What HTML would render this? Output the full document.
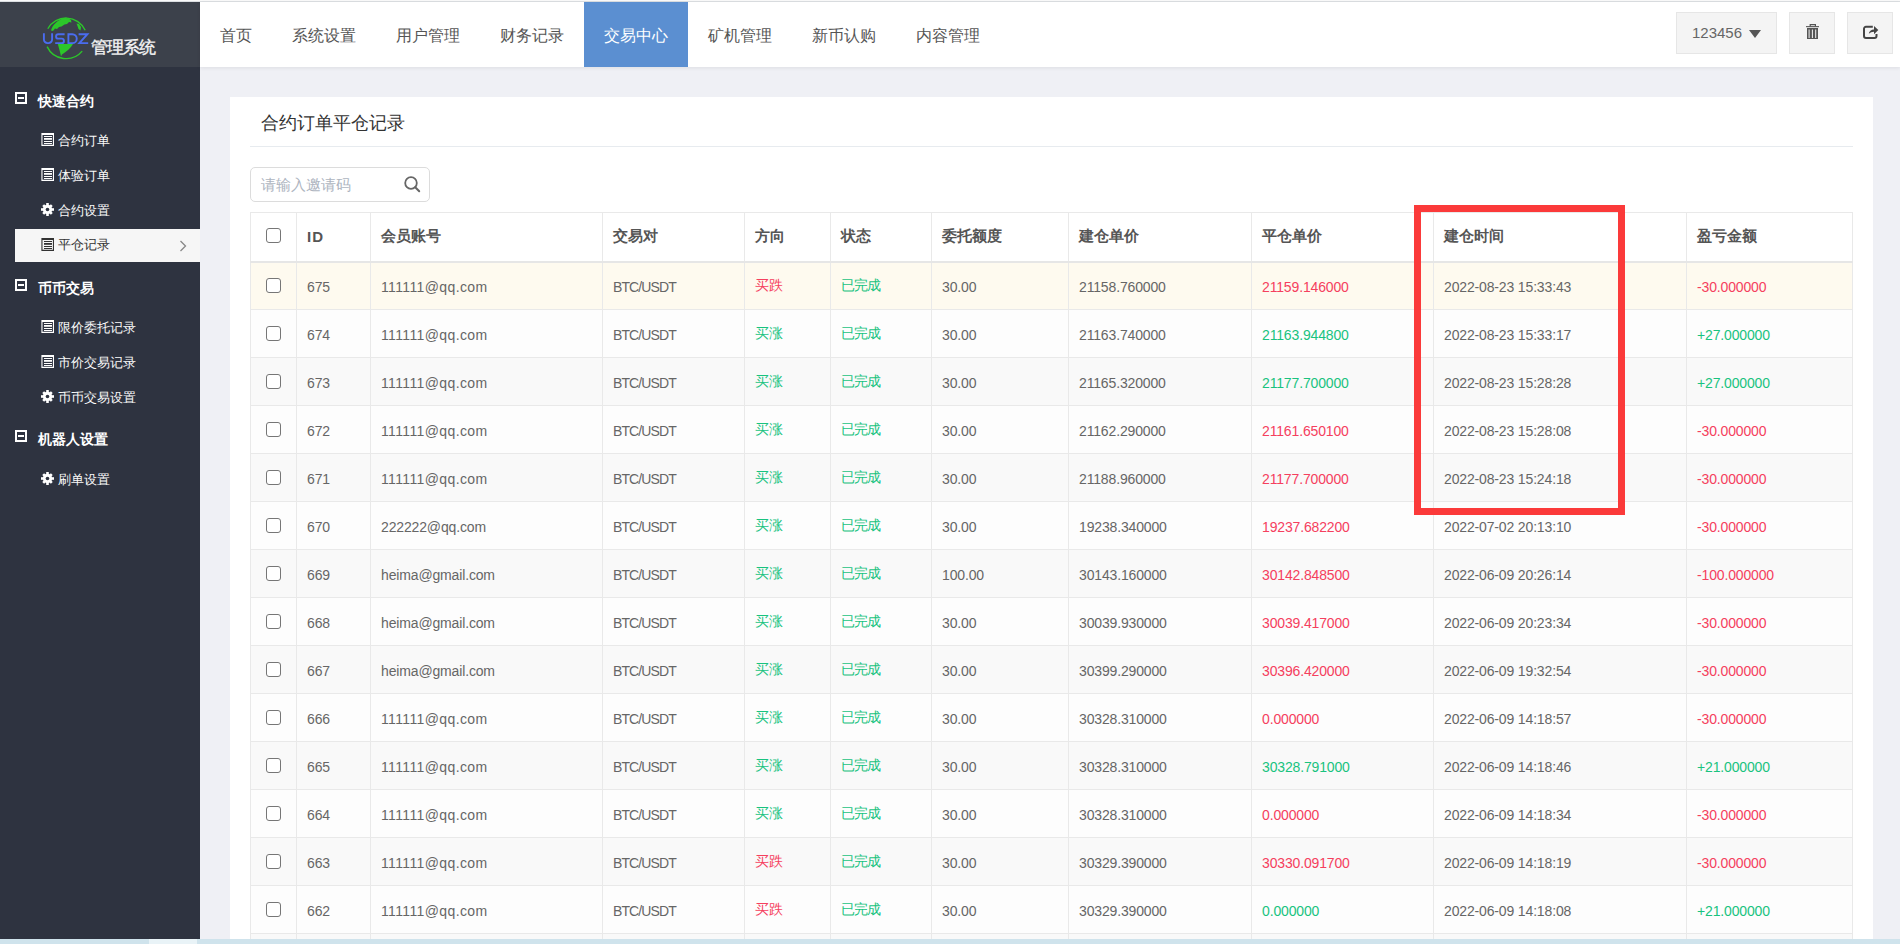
<!DOCTYPE html>
<html><head><meta charset="utf-8"><title>管理系统</title>
<style>
*{box-sizing:border-box;margin:0;padding:0}
html,body{width:1900px;height:944px;overflow:hidden;background:#eff0f5;font-family:"Liberation Sans",sans-serif;color:#666}
.topline{position:absolute;left:0;top:0;width:1900px;height:2px;background:#fafafa;border-bottom:1px solid #dcdfe2}
.side{position:absolute;left:0;top:2px;width:200px;height:937px;background:#2e3340}
.logo{position:absolute;left:0;top:0;width:200px;height:65px;background:#3c414b}
.logo svg{position:absolute;left:40px;top:12px}
.logo .lt{position:absolute;left:91px;top:35px;font-size:17px;line-height:22px;color:#f4f4f4;font-weight:500;letter-spacing:-1.1px;-webkit-text-stroke:.35px #f4f4f4}
.grp{position:absolute;left:0;width:200px;height:24px;color:#fff;font-weight:bold;font-size:14px;line-height:24px}
.grp .mi{position:absolute;left:15px;top:3px;width:12px;height:12px;border:2px solid #fff;}
.grp .mi:after{content:"";position:absolute;left:1px;top:3px;width:6px;height:2px;background:#fff}
.grp span{position:absolute;left:38px;top:0}
.it{position:absolute;left:15px;width:185px;height:35px;color:#fafafa;font-size:13px;line-height:35px;font-weight:500}
.it svg{position:absolute;left:26px;top:11px}
.it span{position:absolute;left:43px;top:1px}
.it.act{background:#f6f6f6;color:#333;height:33px;line-height:33px;font-weight:normal}
.it.act svg{top:9px}
.it.act span{top:-1px}
.it.act .chev{position:absolute;left:164px;top:11px}
.hdr{position:absolute;left:200px;top:2px;width:1700px;height:65px;background:#fff;box-shadow:0 1px 4px rgba(0,0,0,.08)}
.nav{position:absolute;top:0;height:65px;line-height:67px;font-size:16px;color:#555;text-align:center}
.nav.act{background:#5b8fd1;color:#fff}
.btn{position:absolute;top:10px;height:42px;background:#f4f4f4;border:1px solid #e6e6e6}
.panel{position:absolute;left:230px;top:97px;width:1643px;height:850px;background:#fff}
.title{position:absolute;left:31px;top:13px;font-size:18px;line-height:26px;color:#333}
.hr{position:absolute;left:20px;top:49px;width:1603px;height:1px;background:#e7ebef}
.search{position:absolute;left:20px;top:70px;width:180px;height:35px;border:1px solid #dcdcdc;border-radius:5px}
.search .ph{position:absolute;left:10px;top:7px;font-size:15px;line-height:20px;color:#aeb5bf}
.search svg{position:absolute;left:153px;top:8px}
table{position:absolute;left:20px;top:115px;border-collapse:collapse;table-layout:fixed;width:1602px}
td,th{border:1px solid #e9e9e9;padding:0 0 0 10px;font-size:14px;text-align:left;white-space:nowrap;overflow:hidden}
th{height:49px;font-size:15px;font-weight:bold;color:#555;border-bottom:2px solid #e6e6e6;background:#fff}
td{height:48px;color:#666;padding-top:2px;letter-spacing:-.15px}
tr.odd td{background:#f9f9f9}
tr.even td{background:#fdfdfd}
tr.hov td{background:#fefaef}
td.r{color:#f5405e}
td.g{color:#19c37f}
td.cj{padding-top:0}
.la{letter-spacing:.37px}.lb{letter-spacing:-.9px}.lw{letter-spacing:-.9px}
td.cb,th.cb{padding:0;position:relative}
.chk{position:absolute;left:15px;top:16px;width:15px;height:15px;border:1px solid #767676;border-radius:3px;background:#fff}
th .chk{top:15px}
tr.hov .chk{top:15px}
.redbox{position:absolute;left:1414px;top:205px;width:211px;height:310px;border:7px solid #fb3a3a}
.bbar{position:absolute;left:0;top:939px;width:1900px;height:5px;background:#cfe3ec}
.bbar i{position:absolute;left:149px;top:0;width:48px;height:5px;background:#e9f3f7}
</style></head><body>
<div class="topline"></div>
<div class="side">
 <div class="logo">
  <svg width="52" height="48" viewBox="0 0 52 48">
   <path d="M7.8 14.7 A21 21 0 0 1 45.2 16.3" fill="none" stroke="#2cc72a" stroke-width="1.3"/>
   <path d="M7.1 32.6 A21 21 0 0 0 42.2 37.1" fill="none" stroke="#2cc72a" stroke-width="1.4"/>
   <path d="M11 16.5 C12.5 11 17 6.5 24 4 L28 4.2 L31 6 L31.5 8.5 L29 8 L27 10 L24.5 10.5 L21.5 12.5 L19 13 L17 15 L15 14.5 L13 17 Z" fill="#2cc72a"/>
   <path d="M36.5 9.5 L39 10 L41 13 L40.5 16.5 L38.5 15 L37.5 12 Z" fill="#2cc72a"/>
   <path d="M17.8 30 L33 30 C31 34 27 37 22 40.5 L21 42.5 L20 38 Z" fill="#2cc72a"/>
   <g fill="none" stroke="#4a6cf0" stroke-width="1.9"><path d="M3.9 19.3V25.5A3.6 3.6 0 0 0 7.5 29.1H8.5A3.6 3.6 0 0 0 12.1 25.5V19.3"/><path d="M24.6 20.2H18.3A2.225 2.225 0 0 0 18.3 24.65H21.7A2.225 2.225 0 0 1 21.7 29.1H15.2"/><path d="M28.4 20.2V29.1H32.3A4.45 4.45 0 0 0 32.3 20.2Z"/><path d="M38.6 20.2H47.4L39.4 29.1H48.2"/></g>
  </svg>
  <div class="lt">管理系统</div>
 </div>
 <div class="grp" style="top:87px"><i class="mi"></i><span>快速合约</span></div>
 <div class="it" style="top:120px"><svg width="13" height="13" viewBox="0 0 13 13"><g fill="#fff"><path d="M0.4 0H13V13H0.4Z M1.5 2H11.9V11.8H1.5Z" fill-rule="evenodd"/><rect x="3" y="3" width="8" height="1"/><rect x="3" y="5" width="8" height="1.8"/><rect x="3" y="8" width="8" height="1"/><rect x="3" y="10" width="8" height="1"/></g></svg><span>合约订单</span></div>
 <div class="it" style="top:155px"><svg width="13" height="13" viewBox="0 0 13 13"><g fill="#fff"><path d="M0.4 0H13V13H0.4Z M1.5 2H11.9V11.8H1.5Z" fill-rule="evenodd"/><rect x="3" y="3" width="8" height="1"/><rect x="3" y="5" width="8" height="1.8"/><rect x="3" y="8" width="8" height="1"/><rect x="3" y="10" width="8" height="1"/></g></svg><span>体验订单</span></div>
 <div class="it" style="top:190px"><svg width="13" height="13" viewBox="0 0 13 13"><g fill="#fff"><circle cx="6.5" cy="6.5" r="4.7"/><rect x="5.2" y="0" width="2.6" height="13"/><rect x="0" y="5.2" width="13" height="2.6"/><rect x="5.2" y="0.4" width="2.6" height="12.2" transform="rotate(45 6.5 6.5)"/><rect x="5.2" y="0.4" width="2.6" height="12.2" transform="rotate(-45 6.5 6.5)"/></g><circle cx="6.5" cy="6.5" r="1.8" fill="#2e3340"/></svg><span>合约设置</span></div>
 <div class="it act" style="top:227px"><svg width="13" height="13" viewBox="0 0 13 13"><g fill="#333"><path d="M0.4 0H13V13H0.4Z M1.5 2H11.9V11.8H1.5Z" fill-rule="evenodd"/><rect x="3" y="3" width="8" height="1"/><rect x="3" y="5" width="8" height="1.8"/><rect x="3" y="8" width="8" height="1"/><rect x="3" y="10" width="8" height="1"/></g></svg><span>平仓记录</span><svg class="chev" width="8" height="12" viewBox="0 0 8 12"><path d="M1.5 1 L6.5 6 L1.5 11" fill="none" stroke="#888" stroke-width="1.3"/></svg></div>
 <div class="grp" style="top:274px"><i class="mi"></i><span>币币交易</span></div>
 <div class="it" style="top:307px"><svg width="13" height="13" viewBox="0 0 13 13"><g fill="#fff"><path d="M0.4 0H13V13H0.4Z M1.5 2H11.9V11.8H1.5Z" fill-rule="evenodd"/><rect x="3" y="3" width="8" height="1"/><rect x="3" y="5" width="8" height="1.8"/><rect x="3" y="8" width="8" height="1"/><rect x="3" y="10" width="8" height="1"/></g></svg><span>限价委托记录</span></div>
 <div class="it" style="top:342px"><svg width="13" height="13" viewBox="0 0 13 13"><g fill="#fff"><path d="M0.4 0H13V13H0.4Z M1.5 2H11.9V11.8H1.5Z" fill-rule="evenodd"/><rect x="3" y="3" width="8" height="1"/><rect x="3" y="5" width="8" height="1.8"/><rect x="3" y="8" width="8" height="1"/><rect x="3" y="10" width="8" height="1"/></g></svg><span>市价交易记录</span></div>
 <div class="it" style="top:377px"><svg width="13" height="13" viewBox="0 0 13 13"><g fill="#fff"><circle cx="6.5" cy="6.5" r="4.7"/><rect x="5.2" y="0" width="2.6" height="13"/><rect x="0" y="5.2" width="13" height="2.6"/><rect x="5.2" y="0.4" width="2.6" height="12.2" transform="rotate(45 6.5 6.5)"/><rect x="5.2" y="0.4" width="2.6" height="12.2" transform="rotate(-45 6.5 6.5)"/></g><circle cx="6.5" cy="6.5" r="1.8" fill="#2e3340"/></svg><span>币币交易设置</span></div>
 <div class="grp" style="top:425px"><i class="mi"></i><span>机器人设置</span></div>
 <div class="it" style="top:459px"><svg width="13" height="13" viewBox="0 0 13 13"><g fill="#fff"><circle cx="6.5" cy="6.5" r="4.7"/><rect x="5.2" y="0" width="2.6" height="13"/><rect x="0" y="5.2" width="13" height="2.6"/><rect x="5.2" y="0.4" width="2.6" height="12.2" transform="rotate(45 6.5 6.5)"/><rect x="5.2" y="0.4" width="2.6" height="12.2" transform="rotate(-45 6.5 6.5)"/></g><circle cx="6.5" cy="6.5" r="1.8" fill="#2e3340"/></svg><span>刷单设置</span></div>
</div>
<div class="hdr">
 <div class="nav" style="left:0;width:72px">首页</div>
 <div class="nav" style="left:72px;width:104px">系统设置</div>
 <div class="nav" style="left:176px;width:104px">用户管理</div>
 <div class="nav" style="left:280px;width:104px">财务记录</div>
 <div class="nav act" style="left:384px;width:104px">交易中心</div>
 <div class="nav" style="left:488px;width:104px">矿机管理</div>
 <div class="nav" style="left:592px;width:104px">新币认购</div>
 <div class="nav" style="left:696px;width:104px">内容管理</div>
 <div class="btn" style="left:1476px;width:101px"><span style="position:absolute;left:15px;top:10px;font-size:15px;line-height:20px;color:#666">123456</span><svg style="position:absolute;left:72px;top:17px" width="12" height="8" viewBox="0 0 12 8"><path d="M0 0H12L6 8Z" fill="#555"/></svg></div>
 <div class="btn" style="left:1589px;width:46px"><svg style="position:absolute;left:16px;top:11px" width="14" height="16" viewBox="0 0 14 16"><g fill="#555"><path d="M4.2 2.4V0.7H9.4V2.4" fill="none" stroke="#555" stroke-width="1.2"/><rect x="0" y="2.1" width="13" height="1.1"/><path d="M1 4H12V15H1Z M2.6 5.6V14H3.6V5.6Z M5.9 5.6V14H6.9V5.6Z M9.2 5.6V14H10.2V5.6Z" fill-rule="evenodd"/></g></svg></div>
 <div class="btn" style="left:1647px;width:46px"><svg style="position:absolute;left:15px;top:12px" width="16" height="15" viewBox="0 0 16 15"><path d="M9.8 1.8H3A2 2 0 0 0 1 3.8V11A2 2 0 0 0 3 13H11.5A2 2 0 0 0 13.5 11V9" fill="none" stroke="#444" stroke-width="2"/><path d="M5.8 8.8C6.2 6.2 8.2 4.6 11 4.6V1L15.3 5.1L11 9.2V6.8C8.8 6.8 7.2 7.5 5.8 8.8Z" fill="#444"/></svg></div>
</div>
<div class="panel">
 <div class="title">合约订单平仓记录</div>
 <div class="hr"></div>
 <div class="search"><span class="ph">请输入邀请码</span><svg width="17" height="17" viewBox="0 0 17 17"><circle cx="7" cy="7" r="5.8" fill="none" stroke="#666" stroke-width="1.8"/><path d="M11.2 11.2L15.2 15.2" stroke="#666" stroke-width="2" stroke-linecap="round"/></svg></div>
 <table>
  <colgroup><col style="width:46px"><col style="width:74px"><col style="width:232px"><col style="width:142px"><col style="width:86px"><col style="width:101px"><col style="width:137px"><col style="width:183px"><col style="width:182px"><col style="width:253px"><col style="width:166px"></colgroup>
  <tr><th class="cb"><i class="chk"></i></th><th style="letter-spacing:1px">ID</th><th>会员账号</th><th>交易对</th><th>方向</th><th>状态</th><th>委托额度</th><th>建仓单价</th><th>平仓单价</th><th>建仓时间</th><th>盈亏金额</th></tr>
<tr class="hov"><td class="cb"><i class="chk"></i></td><td>675</td><td class="la">111111@qq.com</td><td class="lb">BTC/USDT</td><td class="r cj">买跌</td><td class="g lw cj">已完成</td><td>30.00</td><td>21158.760000</td><td class="r">21159.146000</td><td>2022-08-23 15:33:43</td><td class="r">-30.000000</td></tr>
<tr class="even"><td class="cb"><i class="chk"></i></td><td>674</td><td class="la">111111@qq.com</td><td class="lb">BTC/USDT</td><td class="g cj">买涨</td><td class="g lw cj">已完成</td><td>30.00</td><td>21163.740000</td><td class="g">21163.944800</td><td>2022-08-23 15:33:17</td><td class="g">+27.000000</td></tr>
<tr class="odd"><td class="cb"><i class="chk"></i></td><td>673</td><td class="la">111111@qq.com</td><td class="lb">BTC/USDT</td><td class="g cj">买涨</td><td class="g lw cj">已完成</td><td>30.00</td><td>21165.320000</td><td class="g">21177.700000</td><td>2022-08-23 15:28:28</td><td class="g">+27.000000</td></tr>
<tr class="even"><td class="cb"><i class="chk"></i></td><td>672</td><td class="la">111111@qq.com</td><td class="lb">BTC/USDT</td><td class="g cj">买涨</td><td class="g lw cj">已完成</td><td>30.00</td><td>21162.290000</td><td class="r">21161.650100</td><td>2022-08-23 15:28:08</td><td class="r">-30.000000</td></tr>
<tr class="odd"><td class="cb"><i class="chk"></i></td><td>671</td><td class="la">111111@qq.com</td><td class="lb">BTC/USDT</td><td class="g cj">买涨</td><td class="g lw cj">已完成</td><td>30.00</td><td>21188.960000</td><td class="r">21177.700000</td><td>2022-08-23 15:24:18</td><td class="r">-30.000000</td></tr>
<tr class="even"><td class="cb"><i class="chk"></i></td><td>670</td><td class="">222222@qq.com</td><td class="lb">BTC/USDT</td><td class="g cj">买涨</td><td class="g lw cj">已完成</td><td>30.00</td><td>19238.340000</td><td class="r">19237.682200</td><td>2022-07-02 20:13:10</td><td class="r">-30.000000</td></tr>
<tr class="odd"><td class="cb"><i class="chk"></i></td><td>669</td><td class="">heima@gmail.com</td><td class="lb">BTC/USDT</td><td class="g cj">买涨</td><td class="g lw cj">已完成</td><td>100.00</td><td>30143.160000</td><td class="r">30142.848500</td><td>2022-06-09 20:26:14</td><td class="r">-100.000000</td></tr>
<tr class="even"><td class="cb"><i class="chk"></i></td><td>668</td><td class="">heima@gmail.com</td><td class="lb">BTC/USDT</td><td class="g cj">买涨</td><td class="g lw cj">已完成</td><td>30.00</td><td>30039.930000</td><td class="r">30039.417000</td><td>2022-06-09 20:23:34</td><td class="r">-30.000000</td></tr>
<tr class="odd"><td class="cb"><i class="chk"></i></td><td>667</td><td class="">heima@gmail.com</td><td class="lb">BTC/USDT</td><td class="g cj">买涨</td><td class="g lw cj">已完成</td><td>30.00</td><td>30399.290000</td><td class="r">30396.420000</td><td>2022-06-09 19:32:54</td><td class="r">-30.000000</td></tr>
<tr class="even"><td class="cb"><i class="chk"></i></td><td>666</td><td class="la">111111@qq.com</td><td class="lb">BTC/USDT</td><td class="g cj">买涨</td><td class="g lw cj">已完成</td><td>30.00</td><td>30328.310000</td><td class="r">0.000000</td><td>2022-06-09 14:18:57</td><td class="r">-30.000000</td></tr>
<tr class="odd"><td class="cb"><i class="chk"></i></td><td>665</td><td class="la">111111@qq.com</td><td class="lb">BTC/USDT</td><td class="g cj">买涨</td><td class="g lw cj">已完成</td><td>30.00</td><td>30328.310000</td><td class="g">30328.791000</td><td>2022-06-09 14:18:46</td><td class="g">+21.000000</td></tr>
<tr class="even"><td class="cb"><i class="chk"></i></td><td>664</td><td class="la">111111@qq.com</td><td class="lb">BTC/USDT</td><td class="g cj">买涨</td><td class="g lw cj">已完成</td><td>30.00</td><td>30328.310000</td><td class="r">0.000000</td><td>2022-06-09 14:18:34</td><td class="r">-30.000000</td></tr>
<tr class="odd"><td class="cb"><i class="chk"></i></td><td>663</td><td class="la">111111@qq.com</td><td class="lb">BTC/USDT</td><td class="r cj">买跌</td><td class="g lw cj">已完成</td><td>30.00</td><td>30329.390000</td><td class="r">30330.091700</td><td>2022-06-09 14:18:19</td><td class="r">-30.000000</td></tr>
<tr class="even"><td class="cb"><i class="chk"></i></td><td>662</td><td class="la">111111@qq.com</td><td class="lb">BTC/USDT</td><td class="r cj">买跌</td><td class="g lw cj">已完成</td><td>30.00</td><td>30329.390000</td><td class="g">0.000000</td><td>2022-06-09 14:18:08</td><td class="g">+21.000000</td></tr>
<tr class="odd"><td class="cb"><i class="chk"></i></td><td>661</td><td class="la">111111@qq.com</td><td class="lb">BTC/USDT</td><td class="r cj">买跌</td><td class="g lw cj">已完成</td><td>30.00</td><td>30329.390000</td><td class="g">0.000000</td><td>2022-06-09 14:18:00</td><td class="g">+21.000000</td></tr> </table>
</div>
<div class="redbox"></div>
<div class="bbar"><i></i></div>
</body></html>
